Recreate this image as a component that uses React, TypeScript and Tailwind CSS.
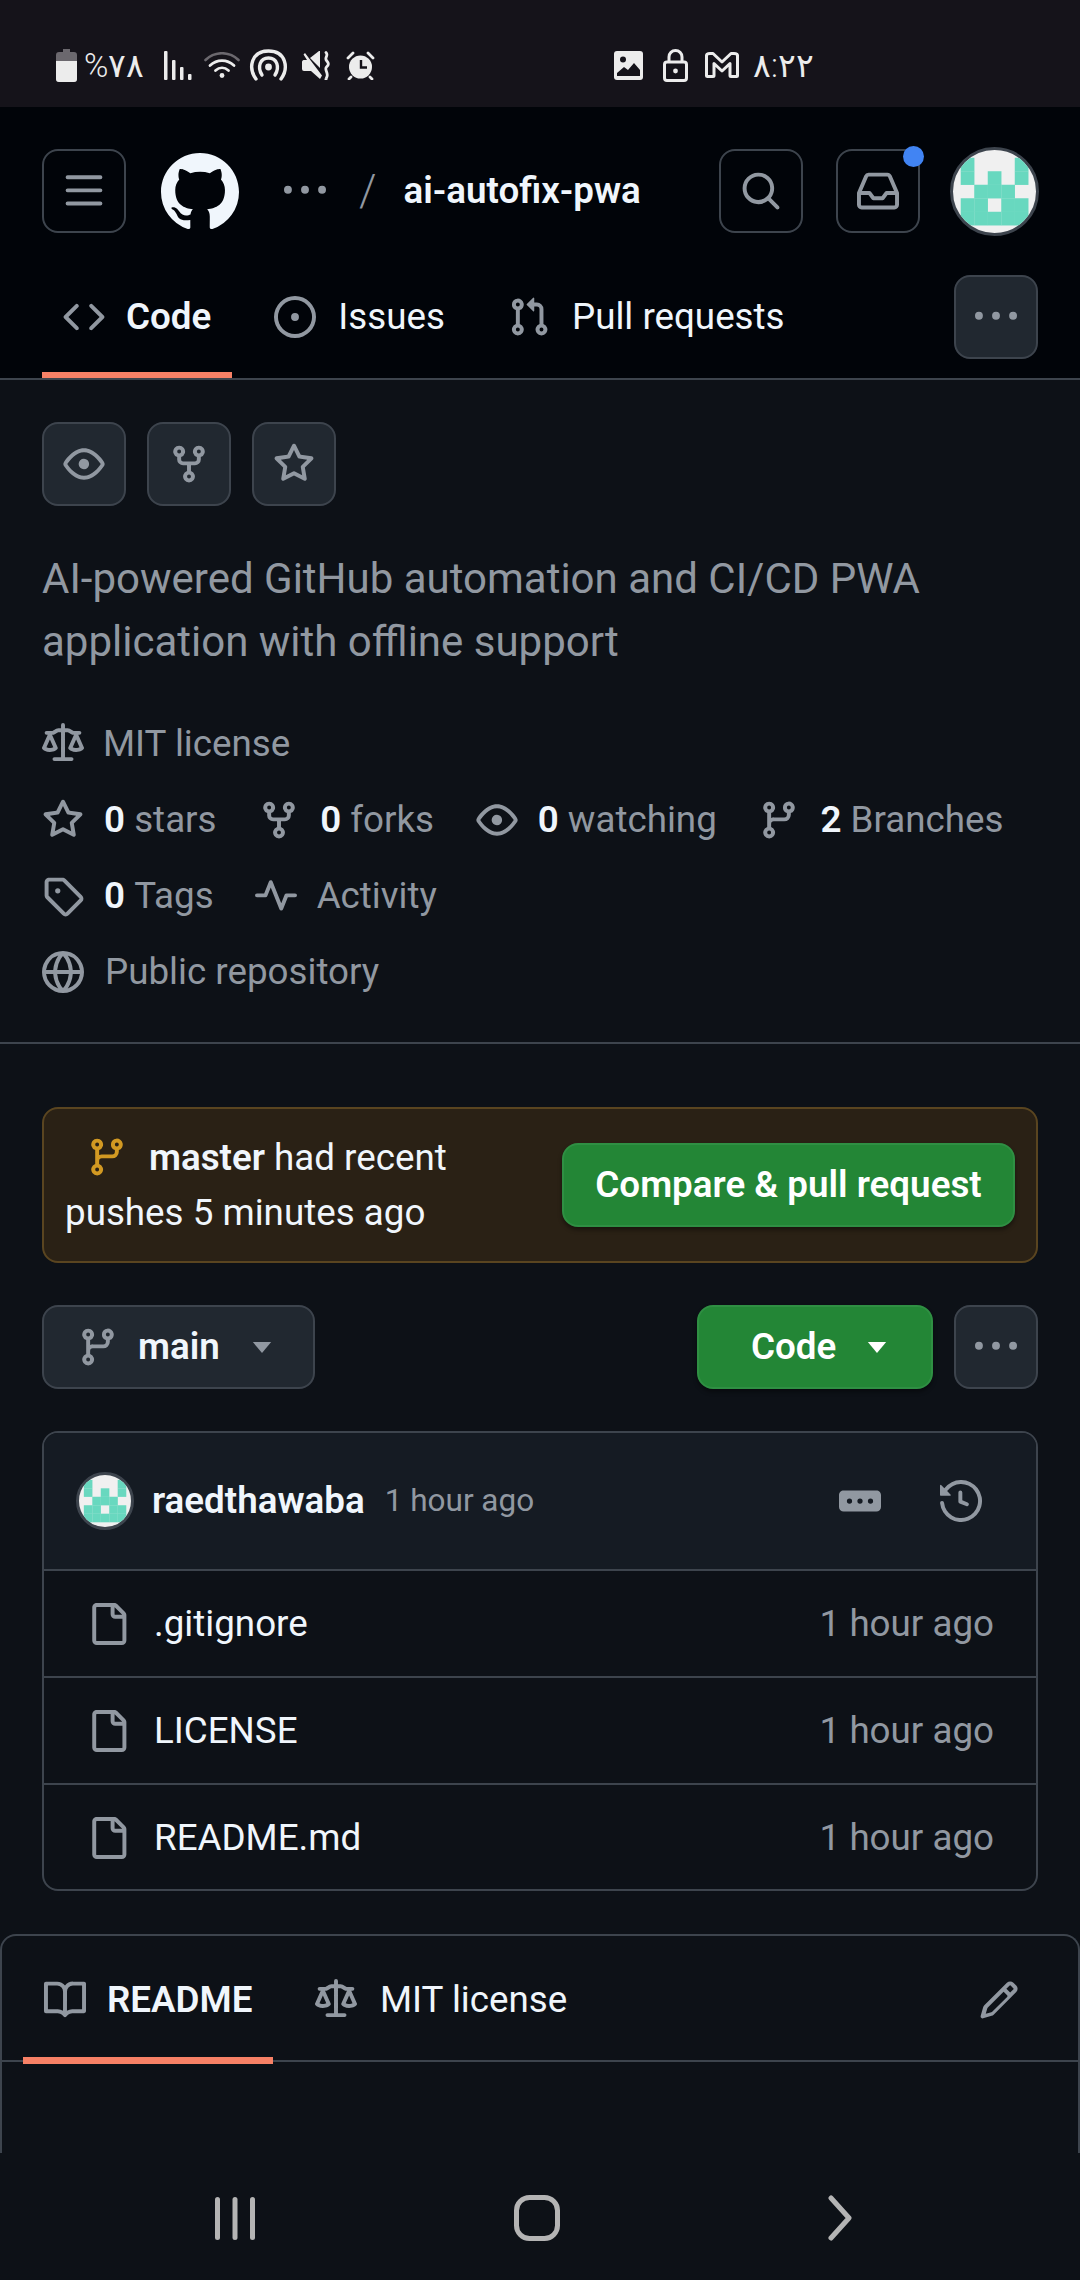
import React from "react";

const P: Record<string, string> = {
  bars: "M1 2.75A.75.75 0 0 1 1.75 2h12.5a.75.75 0 0 1 0 1.5H1.75A.75.75 0 0 1 1 2.75Zm0 5A.75.75 0 0 1 1.75 7h12.5a.75.75 0 0 1 0 1.5H1.75A.75.75 0 0 1 1 7.75ZM1.75 12h12.5a.75.75 0 0 1 0 1.5H1.75a.75.75 0 0 1 0-1.5Z",
  github: "M8 0c4.42 0 8 3.58 8 8a8.013 8.013 0 0 1-5.45 7.59c-.4.08-.55-.17-.55-.38 0-.27.01-1.13.01-2.2 0-.75-.25-1.23-.54-1.48 1.78-.2 3.65-.88 3.65-3.95 0-.88-.31-1.59-.82-2.15.08-.2.36-1.02-.08-2.12 0 0-.67-.22-2.2.82-.64-.18-1.32-.27-2-.27-.68 0-1.36.09-2 .27-1.53-1.03-2.2-.82-2.2-.82-.44 1.1-.16 1.92-.08 2.12-.51.56-.82 1.28-.82 2.15 0 3.06 1.86 3.75 3.64 3.95-.23.2-.44.55-.51 1.07-.46.21-1.61.55-2.33-.66-.15-.24-.6-.83-1.23-.82-.67.01-.27.38.01.53.34.19.73.9.82 1.13.16.45.68 1.31 2.69.94 0 .67.01 1.3.01 1.49 0 .21-.15.45-.55.38A7.995 7.995 0 0 1 0 8c0-4.42 3.58-8 8-8Z",
  kebab: "M8 9a1.5 1.5 0 1 0 0-3 1.5 1.5 0 0 0 0 3ZM1.5 9a1.5 1.5 0 1 0 0-3 1.5 1.5 0 0 0 0 3Zm13 0a1.5 1.5 0 1 0 0-3 1.5 1.5 0 0 0 0 3Z",
  search: "M10.68 11.74a6 6 0 0 1-7.922-8.982 6 6 0 0 1 8.982 7.922l3.04 3.04a.749.749 0 0 1-.326 1.275.749.749 0 0 1-.734-.215ZM11.5 7a4.499 4.499 0 1 0-8.997 0A4.499 4.499 0 0 0 11.5 7Z",
  inbox: "M2.8 2.06A1.75 1.75 0 0 1 4.41 1h7.18c.7 0 1.333.417 1.61 1.06l2.74 6.395c.04.093.06.194.06.295v4.5A1.75 1.75 0 0 1 14.25 15H1.75A1.75 1.75 0 0 1 0 13.25v-4.5c0-.101.02-.202.06-.295Zm1.61.44a.25.25 0 0 0-.23.152L1.887 8H4.75a.75.75 0 0 1 .6.3L6.625 10h2.75l1.275-1.7a.75.75 0 0 1 .6-.3h2.863L11.82 2.652a.25.25 0 0 0-.23-.152Zm10.09 7h-2.875l-1.275 1.7a.75.75 0 0 1-.6.3h-3.5a.75.75 0 0 1-.6-.3L4.375 9.5H1.5v3.75c0 .138.112.25.25.25h12.5a.25.25 0 0 0 .25-.25Z",
  code: "m11.28 3.22 4.25 4.25a.75.75 0 0 1 0 1.06l-4.25 4.25a.749.749 0 0 1-1.275-.326.749.749 0 0 1 .215-.734L13.94 8l-3.72-3.72a.749.749 0 0 1 .326-1.275.749.749 0 0 1 .734.215Zm-6.56 0a.751.751 0 0 1 1.042.018.751.751 0 0 1 .018 1.042L2.06 8l3.72 3.72a.749.749 0 0 1-.326 1.275.749.749 0 0 1-.734-.215L.47 8.53a.75.75 0 0 1 0-1.06Z",
  issue: "M8 9.5a1.5 1.5 0 1 0 0-3 1.5 1.5 0 0 0 0 3ZM8 0a8 8 0 1 1 0 16A8 8 0 0 1 8 0ZM1.5 8a6.5 6.5 0 1 0 13 0 6.5 6.5 0 0 0-13 0Z",
  pr: "M1.5 3.25a2.25 2.25 0 1 1 3 2.122v5.256a2.251 2.251 0 1 1-1.5 0V5.372A2.25 2.25 0 0 1 1.5 3.25Zm5.677-.177L9.573.677A.25.25 0 0 1 10 .854V2.5h1A2.5 2.5 0 0 1 13.5 5v5.628a2.251 2.251 0 1 1-1.5 0V5a1 1 0 0 0-1-1h-1v1.646a.25.25 0 0 1-.427.177L7.177 3.427a.25.25 0 0 1 0-.354ZM3.75 2.5a.75.75 0 1 0 0 1.5.75.75 0 0 0 0-1.5Zm0 9.5a.75.75 0 1 0 0 1.5.75.75 0 0 0 0-1.5Zm8.25.75a.75.75 0 1 0 1.5 0 .75.75 0 0 0-1.5 0Z",
  eye: "M8 2c1.981 0 3.671.992 4.933 2.078 1.27 1.091 2.187 2.345 2.637 3.023a1.62 1.62 0 0 1 0 1.798c-.45.678-1.367 1.932-2.637 3.023C11.67 13.008 9.981 14 8 14c-1.981 0-3.671-.992-4.933-2.078C1.797 10.83.88 9.576.43 8.898a1.62 1.62 0 0 1 0-1.798c.45-.677 1.367-1.931 2.637-3.022C4.33 2.992 6.019 2 8 2ZM1.679 7.932a.12.12 0 0 0 0 .136c.411.622 1.241 1.75 2.366 2.717C5.176 11.758 6.527 12.5 8 12.5c1.473 0 2.825-.742 3.955-1.715 1.124-.967 1.954-2.096 2.366-2.717a.12.12 0 0 0 0-.136c-.412-.621-1.242-1.75-2.366-2.717C10.824 4.242 9.473 3.5 8 3.5c-1.473 0-2.825.742-3.955 1.715-1.124.967-1.954 2.096-2.366 2.717ZM8 10a2 2 0 1 1-.001-3.999A2 2 0 0 1 8 10Z",
  fork: "M5 5.372v.878c0 .414.336.75.75.75h4.5a.75.75 0 0 0 .75-.75v-.878a2.25 2.25 0 1 1 1.5 0v.878a2.25 2.25 0 0 1-2.25 2.25h-1.5v2.128a2.251 2.251 0 1 1-1.5 0V8.5h-1.5A2.25 2.25 0 0 1 3.5 6.25v-.878a2.25 2.25 0 1 1 1.5 0ZM5 3.25a.75.75 0 1 0-1.5 0 .75.75 0 0 0 1.5 0Zm6.75.75a.75.75 0 1 0 0-1.5.75.75 0 0 0 0 1.5Zm-3 8.75a.75.75 0 1 0-1.5 0 .75.75 0 0 0 1.5 0Z",
  star: "M8 .25a.75.75 0 0 1 .673.418l1.882 3.815 4.21.612a.75.75 0 0 1 .416 1.279l-3.046 2.97.719 4.192a.751.751 0 0 1-1.088.791L8 12.347l-3.766 1.98a.75.75 0 0 1-1.088-.79l.72-4.194L.818 6.374a.75.75 0 0 1 .416-1.28l4.21-.611L7.327.668A.75.75 0 0 1 8 .25Zm0 2.445L6.615 5.5a.75.75 0 0 1-.564.41l-3.097.45 2.24 2.184a.75.75 0 0 1 .216.664l-.528 3.084 2.769-1.456a.75.75 0 0 1 .698 0l2.77 1.456-.53-3.084a.75.75 0 0 1 .216-.664l2.24-2.183-3.096-.45a.75.75 0 0 1-.564-.41L8 2.694Z",
  law: "M8.75.75V2h.985c.304 0 .603.08.867.231l1.29.736c.038.022.08.033.124.033h2.234a.75.75 0 0 1 0 1.5h-.427l2.111 4.692a.75.75 0 0 1-.154.838l-.53-.53.529.531-.001.002-.002.002-.006.006-.006.005-.01.01-.045.04c-.21.176-.441.327-.686.45C14.556 10.78 13.88 11 13 11a4.498 4.498 0 0 1-2.023-.454 3.544 3.544 0 0 1-.686-.45l-.045-.04-.016-.015-.006-.006-.004-.004v-.001a.75.75 0 0 1-.154-.838L12.178 4.5h-.162c-.305 0-.604-.079-.868-.231l-1.29-.736a.245.245 0 0 0-.124-.033H8.75V13h2.5a.75.75 0 0 1 0 1.5h-6.5a.75.75 0 0 1 0-1.5h2.5V3.5h-.984a.245.245 0 0 0-.124.033l-1.289.737c-.265.15-.564.23-.869.23h-.162l2.112 4.692a.75.75 0 0 1-.154.838l-.53-.53.529.531-.001.002-.002.002-.006.006-.016.015-.045.04c-.21.176-.441.327-.686.45C4.556 10.78 3.88 11 3 11a4.498 4.498 0 0 1-2.023-.454 3.544 3.544 0 0 1-.686-.45l-.045-.04-.016-.015-.006-.006-.004-.004v-.001a.75.75 0 0 1-.154-.838L2.178 4.5H1.75a.75.75 0 0 1 0-1.5h2.234a.249.249 0 0 0 .125-.033l1.288-.737c.265-.15.564-.23.869-.23h.984V.75a.75.75 0 0 1 1.5 0Zm2.945 8.477c.285.135.718.273 1.305.273s1.02-.138 1.305-.273L13 6.327Zm-10 0c.285.135.718.273 1.305.273s1.02-.138 1.305-.273L3 6.327Z",
  branch: "M9.5 3.25a2.25 2.25 0 1 1 3 2.122V6A2.5 2.5 0 0 1 10 8.5H6a1 1 0 0 0-1 1v1.128a2.251 2.251 0 1 1-1.5 0V5.372a2.25 2.25 0 1 1 1.5 0v1.836A2.493 2.493 0 0 1 6 7h4a1 1 0 0 0 1-1v-.628A2.25 2.25 0 0 1 9.5 3.25Zm-6 0a.75.75 0 1 0 1.5 0 .75.75 0 0 0-1.5 0Zm8.25-.75a.75.75 0 1 0 0 1.5.75.75 0 0 0 0-1.5ZM4.25 12a.75.75 0 1 0 0 1.5.75.75 0 0 0 0-1.5Z",
  tag: "M1 7.775V2.75C1 1.784 1.784 1 2.75 1h5.025c.464 0 .91.184 1.238.513l6.25 6.25a1.75 1.75 0 0 1 0 2.474l-5.026 5.026a1.75 1.75 0 0 1-2.474 0l-6.25-6.25A1.752 1.752 0 0 1 1 7.775Zm1.5 0c0 .066.026.13.073.177l6.25 6.25a.25.25 0 0 0 .354 0l5.025-5.025a.25.25 0 0 0 0-.354l-6.25-6.25a.25.25 0 0 0-.177-.073H2.75a.25.25 0 0 0-.25.25ZM6 5a1 1 0 1 1 0 2 1 1 0 0 1 0-2Z",
  pulse: "M6 2c.306 0 .582.187.696.471L10 10.731l1.304-3.26A.751.751 0 0 1 12 7h3.25a.75.75 0 0 1 0 1.5h-2.742l-1.812 4.528a.751.751 0 0 1-1.392 0L6 4.77 4.696 8.03A.75.75 0 0 1 4 8.5H.75a.75.75 0 0 1 0-1.5h2.742l1.812-4.529A.751.751 0 0 1 6 2Z",
  globe: "M8 0a8 8 0 1 1 0 16A8 8 0 0 1 8 0ZM5.78 8.75a9.64 9.64 0 0 0 1.363 4.177c.255.426.542.832.857 1.215.245-.296.551-.705.857-1.215A9.64 9.64 0 0 0 10.22 8.75Zm4.44-1.5a9.64 9.64 0 0 0-1.363-4.177c-.307-.51-.612-.919-.857-1.215a9.927 9.927 0 0 0-.857 1.215A9.64 9.64 0 0 0 5.78 7.25Zm-5.944 1.5H1.543a6.507 6.507 0 0 0 4.666 5.5c-.123-.181-.24-.365-.352-.552-.715-1.192-1.437-2.874-1.581-4.948Zm-2.733-1.5h2.733c.144-2.074.866-3.756 1.58-4.948.12-.197.237-.381.353-.552a6.507 6.507 0 0 0-4.666 5.5Zm10.181 1.5c-.144 2.074-.866 3.756-1.58 4.948-.12.197-.237.381-.353.552a6.507 6.507 0 0 0 4.666-5.5Zm2.733-1.5a6.507 6.507 0 0 0-4.666-5.5c.123.181.24.365.353.552.714 1.192 1.436 2.874 1.58 4.948Z",
  file: "M2 1.75C2 .784 2.784 0 3.75 0h6.586c.464 0 .909.184 1.237.513l2.914 2.914c.329.328.513.773.513 1.237v9.586A1.75 1.75 0 0 1 13.25 16h-9.5A1.75 1.75 0 0 1 2 14.25Zm1.75-.25a.25.25 0 0 0-.25.25v12.5c0 .138.112.25.25.25h9.5a.25.25 0 0 0 .25-.25V6h-2.75A1.75 1.75 0 0 1 9 4.25V1.5Zm6.75.062V4.25c0 .138.112.25.25.25h2.688l-.011-.013-2.914-2.914-.013-.011Z",
  history: "m.427 1.927 1.215 1.215a8.002 8.002 0 1 1-1.6 5.685.75.75 0 1 1 1.493-.154 6.5 6.5 0 1 0 1.18-4.458l1.358 1.358A.25.25 0 0 1 3.896 6H.25A.25.25 0 0 1 0 5.75V2.104a.25.25 0 0 1 .427-.177ZM7.75 4a.75.75 0 0 1 .75.75v2.992l2.028.812a.75.75 0 0 1-.557 1.392l-2.5-1A.751.751 0 0 1 7 8.25v-3.5A.75.75 0 0 1 7.75 4Z",
  book: "M0 1.75A.75.75 0 0 1 .75 1h4.253c1.227 0 2.317.59 3 1.501A3.743 3.743 0 0 1 11.006 1h4.245a.75.75 0 0 1 .75.75v10.5a.75.75 0 0 1-.75.75h-4.507a2.25 2.25 0 0 0-1.591.659l-.622.621a.75.75 0 0 1-1.06 0l-.622-.621A2.25 2.25 0 0 0 5.258 13H.75a.75.75 0 0 1-.75-.75Zm7.251 10.324.004-5.073-.002-2.253A2.25 2.25 0 0 0 5.003 2.5H1.5v9h3.757a3.75 3.75 0 0 1 1.994.574ZM8.755 4.75l-.004 7.322a3.752 3.752 0 0 1 1.992-.572H14.5v-9h-3.495a2.25 2.25 0 0 0-2.25 2.25Z",
  pencil: "M11.013 1.427a1.75 1.75 0 0 1 2.474 0l1.086 1.086a1.75 1.75 0 0 1 0 2.474l-8.61 8.61c-.21.21-.47.364-.756.445l-3.251.93a.75.75 0 0 1-.927-.928l.929-3.25c.081-.286.235-.547.445-.758l8.61-8.61Zm.176 4.823L9.75 4.81l-6 6a.749.749 0 0 0-.188.324l-.61 2.133 2.126-.61a.73.73 0 0 0 .33-.193l5.781-5.744Zm1.238-3.763a.25.25 0 0 0-.354 0L10.811 3.75l1.439 1.44 1.263-1.263a.25.25 0 0 0 0-.354Z",
  ellipsis: "M0 5.75C0 4.784.784 4 1.75 4h12.5c.966 0 1.75.784 1.75 1.75v4.5A1.75 1.75 0 0 1 14.25 12H1.75A1.75 1.75 0 0 1 0 10.25ZM12 7a1 1 0 1 0 0 2 1 1 0 0 0 0-2ZM7 8a1 1 0 1 0 2 0 1 1 0 0 0-2 0ZM4 7a1 1 0 1 0 0 2 1 1 0 0 0 0-2Z",
};

function Oct({ n, className = "" }: { n: string; className?: string }) {
  return (
    <svg viewBox="0 0 16 16" fill="currentColor" className={`shrink-0 ${className}`}>
      <path d={P[n]} />
    </svg>
  );
}

function Identicon({ className = "" }: { className?: string }) {
  const rows = ["10001", "10101", "01110", "11011", "11111"];
  return (
    <span className={`block shrink-0 overflow-hidden rounded-full border-[3px] border-[#3d444d] bg-[#f0f0f0] ${className}`}>
      <svg viewBox="0 0 86 86" className="block h-full w-full">
        {rows.map((r, y) =>
          r.split("").map((c, x) =>
            c === "1" ? <rect key={`${x}-${y}`} x={8 + x * 14} y={8 + y * 14} width="14.2" height="14.2" fill="#68d8bf" /> : null
          )
        )}
      </svg>
    </span>
  );
}

function IconButton({ n, filled = false, className = "" }: { n: string; filled?: boolean; className?: string }) {
  return (
    <div
      className={`flex h-[84px] w-[84px] shrink-0 items-center justify-center rounded-[16px] border-2 border-[#3d444d] text-[#9198a1] ${
        filled ? "bg-[#212830]" : ""
      } ${className}`}
    >
      <Oct n={n} className="h-[42px] w-[42px]" />
    </div>
  );
}

function Stat({ n, num, label, gap = "gap-[20px]" }: { n: string; num?: string; label: string; gap?: string }) {
  return (
    <div className={`flex items-center ${gap}`}>
      <Oct n={n} className="h-[42px] w-[42px] text-[#9198a1]" />
      <span className="text-[36.75px] leading-[54px] whitespace-nowrap text-[#9198a1]">
        {num && <span className="font-semibold text-[#f0f6fc]">{num} </span>}
        {label}
      </span>
    </div>
  );
}

function FileRow({ name }: { name: string }) {
  return (
    <div className="flex h-[107px] items-center border-t-2 border-[#3d444d] pr-[42px] pl-[43px] text-[36.75px]">
      <Oct n="file" className="h-[42px] w-[42px] text-[#9198a1]" />
      <span className="ml-[25px] flex-1 text-[#f0f6fc]">{name}</span>
      <span className="text-[#9198a1]">1 hour ago</span>
    </div>
  );
}

function StatusBar() {
  const c = "#ececec";
  return (
    <div className="flex h-[107px] shrink-0 items-center bg-[#15131a] pt-[23px] pl-[56px] text-[#ececec]">
      <svg viewBox="0 0 21 33" className="h-[33px] w-[21px] shrink-0">
        <path d="M7 0h7v3h4a3 3 0 0 1 3 3v24a3 3 0 0 1-3 3H3a3 3 0 0 1-3-3V6a3 3 0 0 1 3-3h4Z" fill="#6b686e" />
        <path d="M0 12h21v18a3 3 0 0 1-3 3H3a3 3 0 0 1-3-3Z" fill={c} />
      </svg>
      <span className="ml-[7px] w-[60px] font-['Roboto','DejaVu_Sans',sans-serif] text-[33px] leading-none font-light whitespace-nowrap">
        %۷۸
      </span>
      <svg viewBox="0 0 28 29" className="ml-[20px] h-[29px] w-[28px] shrink-0" fill={c}>
        <rect x="0" y="0" width="3.5" height="29" rx="1" />
        <rect x="8" y="9" width="3.5" height="20" rx="1" />
        <rect x="16" y="16" width="3.5" height="13" rx="1" />
        <rect x="24" y="23" width="3.5" height="6" rx="1" />
      </svg>
      <svg viewBox="0 0 36 26" className="ml-[12px] h-[26px] w-[36px] shrink-0" fill="none" strokeLinecap="round">
        <path d="M1.5 8C11 -1 25 -1 34.5 8" stroke="#6b686e" strokeWidth="2.6" />
        <path d="M6 13.5C13 7 23 7 30 13.5" stroke={c} strokeWidth="2.8" />
        <path d="M11.5 18.5C15.5 15 20.5 15 24.5 18.5" stroke={c} strokeWidth="2.8" />
        <circle cx="18" cy="23.5" r="2.4" fill={c} />
      </svg>
      <svg viewBox="0 0 39 32" className="ml-[9px] h-[32px] w-[39px] shrink-0" fill="none" stroke={c} strokeWidth="3.4" strokeLinecap="round">
        <path d="M7 30C-1 19 2 2 19.5 2S40 19 32 30" />
        <path d="M13 26C8 18 11 9 19.5 9S31 18 26 26" />
        <circle cx="19.5" cy="18" r="3.4" fill={c} stroke="none" />
      </svg>
      <svg viewBox="0 0 28 29" className="ml-[14px] h-[29px] w-[28px] shrink-0" fill={c}>
        <path d="M3 2 20 24.5 18 28 9 20H2a2 2 0 0 1-2-2v-7a2 2 0 0 1 1.5-2L5 9 1.5 3.5Z" />
        <path d="M8 7 17 0h1v17Z" />
        <path d="M24 1.500c3 3-2 5 .5 8s2.500 4 0 6.500 2 6 .5 9.500-1 3-1 3" fill="none" stroke={c} strokeWidth="2.8" strokeLinecap="round" />
      </svg>
      <svg viewBox="0 0 29 29" className="ml-[16px] h-[29px] w-[29px] shrink-0">
        <circle cx="14.500" cy="16" r="11.500" fill={c} />
        <path d="M15 9v7.500h6" fill="none" stroke="#15131a" strokeWidth="2.400" />
        <path d="M2 7 7 2M27 7 22 2M5 26 3 28M24 26l2 2" stroke={c} strokeWidth="2.800" strokeLinecap="round" />
      </svg>
      <svg viewBox="0 0 29 29" className="ml-[239px] h-[29px] w-[29px] shrink-0">
        <rect width="29" height="29" rx="3" fill={c} />
        <circle cx="9" cy="8.500" r="3" fill="#15131a" />
        <path d="M3 25v-3l7-6 4 3 6-7 6 7v6Z" fill="#15131a" />
      </svg>
      <svg viewBox="0 0 25 33" className="ml-[20px] h-[33px] w-[25px] shrink-0" fill="none" stroke={c} strokeWidth="3">
        <rect x="1.500" y="13" width="22" height="18.500" rx="2.500" />
        <path d="M6 13V8a6.500 6.500 0 0 1 13 0v5" />
        <circle cx="12.500" cy="22" r="2.400" fill={c} stroke="none" />
      </svg>
      <svg viewBox="0 0 34 26" className="ml-[17px] h-[26px] w-[34px] shrink-0" fill="none" stroke={c} strokeWidth="3" strokeLinejoin="round">
        <path d="M1.500 3.500Q1.500 1.500 5 1.500h3L17 10l9-8.500h3q3.500 0 3.500 2v20q0 1-1 1H26q-1 0-1-1V11.500L17 19l-8-7.500V23.500q0 1-1 1H2.500q-1 0-1-1Z" />
      </svg>
      <span className="ml-[14px] font-['Roboto','DejaVu_Sans',sans-serif] text-[33px] leading-none font-light whitespace-nowrap">
        ۸:۲۲
      </span>
    </div>
  );
}

function Header() {
  return (
    <div className="h-[273px] shrink-0 border-b-2 border-[#3d444d] bg-[#010409] pt-[42px] pr-[42px] pl-[42px]">
      <div className="flex h-[84px] items-center">
        <IconButton n="bars" />
        <div className="mt-[1px] ml-[35px] shrink-0 text-[#f0f6fc]">
          <Oct n="github" className="h-[78px] w-[78px]" />
        </div>
        <Oct n="kebab" className="ml-[45px] h-[42px] w-[42px] text-[#9198a1]" />
        <span className="ml-[33px] text-[44px] leading-none font-light text-[#9198a1]">/</span>
        <span className="ml-[27px] text-[36.75px] font-semibold whitespace-nowrap text-[#f0f6fc]">ai-autofix-pwa</span>
        <div className="flex-1" />
        <IconButton n="search" className="ml-[1px]" />
        <div className="relative ml-[33px]">
          <IconButton n="inbox" />
          <span className="absolute top-[-3px] right-[-4px] h-[21px] w-[21px] rounded-full bg-[#4184f3]" />
        </div>
        <Identicon className="mr-[-1px] ml-[30px] h-[89px] w-[89px]" />
      </div>
      <div className="mt-[42px] flex h-[103px] items-start gap-[21px]">
        <div className="flex h-[103px] items-start border-b-[6px] border-[#f78166] px-[21px]">
          <div className="flex h-[84px] items-center gap-[21px]">
            <Oct n="code" className="h-[42px] w-[42px] text-[#9198a1]" />
            <span className="text-[36.75px] font-semibold text-[#f0f6fc]">Code</span>
          </div>
        </div>
        <div className="flex h-[84px] items-center gap-[22px] px-[21px]">
          <Oct n="issue" className="h-[42px] w-[42px] text-[#9198a1]" />
          <span className="text-[36.75px] text-[#f0f6fc]">Issues</span>
        </div>
        <div className="flex h-[84px] items-center gap-[22px] px-[21px]">
          <Oct n="pr" className="h-[42px] w-[42px] text-[#9198a1]" />
          <span className="text-[36.75px] text-[#f0f6fc]">Pull requests</span>
        </div>
        <div className="flex-1" />
        <IconButton n="kebab" filled />
      </div>
    </div>
  );
}

function About() {
  return (
    <div className="h-[664px] shrink-0 border-b-2 border-[#3d444d] px-[42px] pt-[42px]">
      <div className="flex gap-[21px]">
        <IconButton n="eye" filled />
        <IconButton n="fork" filled />
        <IconButton n="star" filled />
      </div>
      <p className="mt-[41px] text-[42px] leading-[63px] text-[#9198a1]">
        AI-powered GitHub automation and CI/CD PWA
        <br />
        application with offline support
      </p>
      <div className="mt-[33px] flex flex-col">
        <div className="flex h-[76px] items-center">
          <Stat n="law" label="MIT license" gap="gap-[19px]" />
        </div>
        <div className="flex h-[76px] items-center gap-[41.6px]">
          <Stat n="star" num="0" label="stars" />
          <Stat n="fork" num="0" label="forks" />
          <Stat n="eye" num="0" label="watching" />
          <Stat n="branch" num="2" label="Branches" />
        </div>
        <div className="flex h-[76px] items-center gap-[41px]">
          <Stat n="tag" num="0" label="Tags" />
          <Stat n="pulse" label="Activity" />
        </div>
        <div className="flex h-[76px] items-center">
          <Stat n="globe" label="Public repository" gap="gap-[21px]" />
        </div>
      </div>
    </div>
  );
}

function Banner() {
  return (
    <div className="flex h-[156px] items-center justify-between rounded-[16px] border-2 border-[#5a4520] bg-[#2a2115] pr-[21px] pl-[21px]">
      <div className="text-[36.75px] leading-[55px] text-[#f0f6fc]">
        <Oct n="branch" className="mr-[21px] ml-[21px] inline-block h-[42px] w-[42px] align-[-8px] text-[#d29922]" />
        <span className="font-semibold">master</span> had recent
        <br />
        pushes 5 minutes ago
      </div>
      <div className="flex h-[84px] w-[453px] shrink-0 items-center justify-center rounded-[16px] border-2 border-[#2f8f43] bg-[#238636] text-[36.75px] font-semibold whitespace-nowrap text-white shadow-[0_3px_4px_rgba(0,0,0,0.4)]">
        Compare &amp; pull request
      </div>
    </div>
  );
}

function BranchRow() {
  return (
    <div className="mt-[42px] flex items-center">
      <div className="flex h-[84px] w-[273px] items-center rounded-[16px] border-2 border-[#3d444d] bg-[#212830] pl-[33px]">
        <Oct n="branch" className="h-[42px] w-[42px] text-[#9198a1]" />
        <span className="ml-[19px] text-[36.75px] font-semibold text-[#f0f6fc]">main</span>
        <svg viewBox="0 0 20 12" className="ml-[32px] h-[11px] w-[20px] text-[#9198a1]" fill="currentColor">
          <path d="M0 0h20L10 12Z" />
        </svg>
      </div>
      <div className="flex-1" />
      <div className="flex h-[84px] w-[236px] items-center rounded-[16px] border-2 border-[#2f8f43] bg-[#238636] pl-[52px] text-white shadow-[0_3px_4px_rgba(0,0,0,0.4)]">
        <span className="text-[36.75px] font-semibold">Code</span>
        <svg viewBox="0 0 20 12" className="ml-[31px] h-[11px] w-[20px]" fill="currentColor">
          <path d="M0 0h20L10 12Z" />
        </svg>
      </div>
      <IconButton n="kebab" filled className="ml-[21px]" />
    </div>
  );
}

function FilesBox() {
  return (
    <div className="mt-[42px] h-[460px] overflow-hidden rounded-[16px] border-2 border-[#3d444d]">
      <div className="flex h-[136px] items-center bg-[#151b23] pr-[54px] pl-[32px]">
        <Identicon className="h-[58px] w-[58px] border-2" />
        <span className="ml-[18px] text-[36.75px] font-semibold text-[#f0f6fc]">raedthawaba</span>
        <span className="ml-[20px] flex-1 text-[31.5px] text-[#9198a1]">1 hour ago</span>
        <Oct n="ellipsis" className="h-[42px] w-[42px] text-[#9198a1]" />
        <Oct n="history" className="ml-[59px] h-[42px] w-[42px] text-[#9198a1]" />
      </div>
      <FileRow name=".gitignore" />
      <FileRow name="LICENSE" />
      <FileRow name="README.md" />
    </div>
  );
}

function Readme() {
  return (
    <div className="mt-[43px] h-[240px] overflow-hidden rounded-t-[16px] border-x-2 border-t-2 border-[#3d444d]">
      <div className="flex h-[126px] items-start border-b-2 border-[#3d444d] pr-[58px] pl-[21px]">
        <div className="relative z-10 flex h-[128px] w-[250px] shrink-0 items-center gap-[21px] border-b-[7px] border-[#f78166] pt-[7px] pl-[21px]">
          <Oct n="book" className="h-[42px] w-[42px] text-[#9198a1]" />
          <span className="text-[36.75px] font-semibold text-[#f0f6fc]">README</span>
        </div>
        <div className="ml-[42px] flex h-[128px] items-center gap-[23px]">
          <Oct n="law" className="h-[42px] w-[42px] text-[#9198a1]" />
          <span className="text-[36.75px] text-[#f0f6fc]">MIT license</span>
        </div>
        <div className="flex-1" />
        <div className="flex h-[128px] items-center">
          <Oct n="pencil" className="h-[42px] w-[42px] text-[#9198a1]" />
        </div>
      </div>
    </div>
  );
}

function NavBar() {
  return (
    <div className="flex h-[127px] shrink-0 items-start bg-[#0d1117] pt-[42px] pl-[213px] text-[#b4b4b4]">
      <svg viewBox="0 0 44 46" className="h-[46px] w-[44px] shrink-0" fill="currentColor">
        <rect x="2" y="2" width="5" height="43" rx="2.500" />
        <rect x="19.500" y="2" width="5" height="43" rx="2.500" />
        <rect x="37" y="2" width="5" height="43" rx="2.500" />
      </svg>
      <svg viewBox="0 0 46 46" className="ml-[257px] h-[46px] w-[46px] shrink-0" fill="none" stroke="currentColor" strokeWidth="5">
        <rect x="2.500" y="2.500" width="41" height="41" rx="13" />
      </svg>
      <svg viewBox="0 0 24 46" className="ml-[268px] h-[46px] w-[24px] shrink-0" fill="none" stroke="currentColor" strokeWidth="5" strokeLinecap="round" strokeLinejoin="round">
        <path d="M3 3 21 23 3 43" />
      </svg>
    </div>
  );
}

export default function App() {
  return (
    <div className="flex h-[2280px] w-[1080px] flex-col overflow-hidden bg-[#0d1117] font-['Roboto',sans-serif]">
      <StatusBar />
      <Header />
      <div className="h-[1773px] min-h-0 flex-1 overflow-hidden">
        <About />
        <div className="px-[42px] pt-[63px]">
          <Banner />
          <BranchRow />
          <FilesBox />
        </div>
        <Readme />
      </div>
      <NavBar />
    </div>
  );
}
